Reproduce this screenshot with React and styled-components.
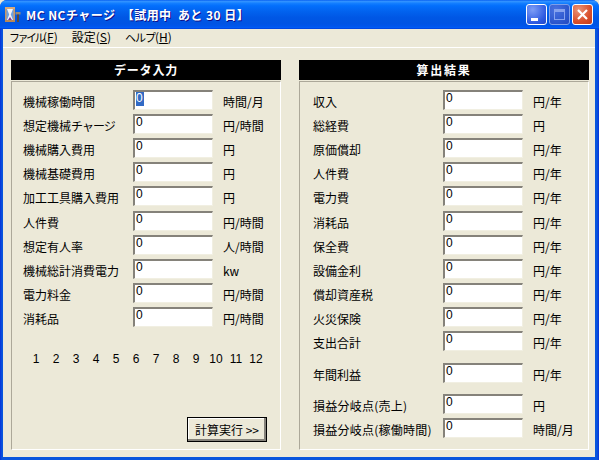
import React from "react";
import styled, { createGlobalStyle } from "styled-components";

const GlobalStyle = createGlobalStyle`
  html, body {
    margin: 0;
    padding: 0;
    background: #ece9d8;
  }
  body {
    width: 599px;
    height: 460px;
    overflow: hidden;
    font-family: "Noto Sans CJK JP", "Liberation Sans", sans-serif;
    font-size: 12px;
    color: #000;
  }
`;

const inputRows = [
  ["機械稼働時間", "時間/月"],
  ["想定機械", "円/時間", "チャージ"],
  ["機械購入費用", "円"],
  ["機械基礎費用", "円"],
  ["加工工具購入費用", "円"],
  ["人件費", "円/時間"],
  ["想定有人率", "人/時間"],
  ["機械総計消費電力", "kw"],
  ["電力料金", "円/時間"],
  ["消耗品", "円/時間"],
];

const resultRows = [
  ["収入", "円/年"],
  ["総経費", "円"],
  ["原価償却", "円/年"],
  ["人件費", "円/年"],
  ["電力費", "円/年"],
  ["消耗品", "円/年"],
  ["保全費", "円/年"],
  ["設備金利", "円/年"],
  ["償却資産税", "円/年"],
  ["火災保険", "円/年"],
  ["支出合計", "円/年"],
];

const months = [1, 2, 3, 4, 5, 6, 7, 8, 9, 10, 11, 12];

const App = () => {
  return (
    <Window>
      <GlobalStyle />
      <TitleBar>
        <AppIcon viewBox="0 0 16 16">
          <rect x="0" y="0" width="10" height="15" fill="#6f9fe0" />
          <rect x="0" y="0" width="10" height="2" fill="#d8a878" />
          <rect x="0" y="13" width="10" height="2" fill="#b88858" />
          <rect x="0" y="2" width="1.5" height="11" fill="#c89868" />
          <rect x="8.5" y="2" width="1.5" height="11" fill="#c89868" />
          <path d="M2 2h6L5.8 7.5 8 13H2l2.2-5.5z" fill="#f4f4f8" />
          <path d="M3 13l2-3 2 3z" fill="#7a3a9a" />
          <rect x="10.5" y="5" width="5" height="2.5" fill="#9a8a78" />
          <rect x="12" y="7.5" width="2" height="7.5" fill="#5a4a40" />
        </AppIcon>
        <TitleText>MC NCチャージ  【試用中  あと 30 日】</TitleText>
        <WindowButtons>
          <MinButton>
            <MinGlyph />
          </MinButton>
          <MaxButton>
            <MaxGlyph />
          </MaxButton>
          <CloseButton>
            <svg width="13" height="13" viewBox="0 0 13 13">
              <path d="M2 2l9 9M11 2l-9 9" stroke="#fff" strokeWidth="2.2" />
            </svg>
          </CloseButton>
        </WindowButtons>
      </TitleBar>
      <Body>
        <MenuBar>
          <MenuItem>
            <MenuKana $squeeze={2.5}>ファイル</MenuKana>(<u>F</u>)
          </MenuItem>
          <MenuItem>設定(<u>S</u>)</MenuItem>
          <MenuItem>
            <MenuKana $squeeze={1}>ヘルプ</MenuKana>(<u>H</u>)
          </MenuItem>
        </MenuBar>
        <Columns>
          <Panel $width={270}>
            <PanelHeader $spacing={0.8}>データ入力</PanelHeader>
            <PanelBody>
              <Rows>
                {inputRows.map(([label, unit, kana], i) => (
                  <Row key={label} $labelWidth={110} $gap={i === 4 ? 5 : 4}>
                    <Label>
                      {label}
                      {kana && <LabelKana>{kana}</LabelKana>}
                    </Label>
                    <Field>{i === 0 ? <Selected>0</Selected> : "0"}</Field>
                    <Unit>{unit}</Unit>
                  </Row>
                ))}
              </Rows>
              <Months>
                {months.map((m) => (
                  <Month key={m}>{m}</Month>
                ))}
              </Months>
              <RunButton>計算実行 &gt;&gt;</RunButton>
            </PanelBody>
          </Panel>
          <Panel $width={290}>
            <PanelHeader $spacing={1.7}>算出結果</PanelHeader>
            <ResultBody>
              <Rows>
                {resultRows.map(([label, unit], i) => (
                  <Row key={label} $labelWidth={130} $gap={i === 4 ? 5 : 4}>
                    <Label>{label}</Label>
                    <Field>0</Field>
                    <Unit>{unit}</Unit>
                  </Row>
                ))}
                <ProfitRow $labelWidth={130} $gap={11}>
                  <Label>年間利益</Label>
                  <Field>0</Field>
                  <Unit>円/年</Unit>
                </ProfitRow>
                <Row $labelWidth={130} $gap={4}>
                  <WideLabel>損益分岐点(売上)</WideLabel>
                  <Field>0</Field>
                  <Unit>円</Unit>
                </Row>
                <Row $labelWidth={130} $gap={4}>
                  <WideLabel>損益分岐点(稼働時間)</WideLabel>
                  <Field>0</Field>
                  <Unit>時間/月</Unit>
                </Row>
              </Rows>
            </ResultBody>
          </Panel>
        </Columns>
      </Body>
    </Window>
  );
};

export default App;

const Window = styled.div`
  width: 599px;
  height: 460px;
  box-sizing: border-box;
  display: flex;
  flex-direction: column;
  padding: 0 4px 3px 3px;
  background: linear-gradient(90deg, #0831d9 0, #0855dd 2px, #0855dd calc(100% - 2px), #0831d9 100%);
  border-radius: 7px 7px 0 0;
  overflow: hidden;
`;

const TitleBar = styled.div`
  flex: none;
  height: 29px;
  margin: 0 -4px 0 -3px;
  padding: 0 6px 0 5px;
  display: flex;
  align-items: center;
  background: linear-gradient(
    180deg,
    #0058ee 0,
    #3593ff 4%,
    #288eff 7%,
    #127dff 12%,
    #036ffc 20%,
    #0262ee 40%,
    #0057e5 60%,
    #0054e3 80%,
    #0055eb 90%,
    #005bf5 95%,
    #003dd7 100%
  );
`;

const AppIcon = styled.svg`
  width: 16px;
  height: 16px;
  margin: 1px 5px 0 0;
  flex: none;
`;

const TitleText = styled.div`
  flex: 1;
  color: #fff;
  font-family: "Noto Sans CJK JP", sans-serif;
  font-size: 12px;
  font-weight: 700;
  letter-spacing: 0.45px;
  white-space: pre;
  text-shadow: 1px 1px 0 #0f1089;
`;

const WindowButtons = styled.div`
  display: flex;
  gap: 2px;
  margin-top: -1px;
`;

const CaptionButton = styled.div`
  width: 21px;
  height: 21px;
  box-sizing: border-box;
  border: 1px solid #fff;
  border-radius: 3px;
  display: flex;
  align-items: center;
  justify-content: center;
  position: relative;
`;

const MinButton = styled(CaptionButton)`
  background: radial-gradient(circle at 30% 25%, #7d9df6, #2c58e0 70%, #2248c8);
`;

const MaxButton = styled(CaptionButton)`
  border-color: #7f9fe8;
  background: radial-gradient(circle at 30% 25%, #4a72e0, #2a55cc 70%, #2448c0);
`;

const CloseButton = styled(CaptionButton)`
  background: radial-gradient(circle at 30% 25%, #ea9478, #d9502c 60%, #c23a1a);
`;

const MinGlyph = styled.div`
  position: absolute;
  left: 4px;
  bottom: 3px;
  width: 7px;
  height: 3px;
  background: #fff;
`;

const MaxGlyph = styled.div`
  width: 11px;
  height: 11px;
  box-sizing: border-box;
  border: 1px solid #86a2ee;
  border-top-width: 3px;
`;

const Body = styled.div`
  flex: 1;
  display: flex;
  flex-direction: column;
  background: #ece9d8;
  min-height: 0;
`;

const MenuBar = styled.div`
  flex: none;
  height: 19px;
  box-sizing: border-box;
  padding: 0 0 3px 6px;
  display: flex;
  align-items: center;
  gap: 14px;
  border-bottom: 1px solid #fff;
  font-size: 12px;
`;

const MenuItem = styled.span`
  white-space: nowrap;
`;

const MenuKana = styled.span`
  font-size: 11px;
  letter-spacing: -${(p) => p.$squeeze}px;
`;

const Columns = styled.div`
  flex: 1;
  display: flex;
  gap: 18px;
  padding: 12px 0 7px 8px;
  min-height: 0;
`;

const Panel = styled.div`
  width: ${(p) => p.$width}px;
  display: flex;
  flex-direction: column;
`;

const PanelHeader = styled.div`
  flex: none;
  height: 20px;
  background: #000;
  color: #fff;
  font-weight: 700;
  font-size: 12px;
  line-height: 20px;
  text-align: center;
  letter-spacing: ${(p) => p.$spacing}px;
`;

const PanelBody = styled.div`
  flex: 1;
  position: relative;
  box-sizing: border-box;
  margin-top: 1px;
  padding: 7px 0 0 11px;
  border-left: 1px solid #aca899;
  border-right: 1px solid #fff;
  border-bottom: 1px solid #fff;
  border-top: 1px solid #aca899;
`;

const ResultBody = styled(PanelBody)`
  padding-left: 13px;
`;

const Rows = styled.div`
  display: flex;
  flex-direction: column;
`;

const Row = styled.div`
  display: grid;
  grid-template-columns: ${(p) => p.$labelWidth}px 80px auto;
  align-items: center;
  height: 20px;
  margin-bottom: ${(p) => p.$gap}px;
`;

const ProfitRow = styled(Row)`
  margin-top: 8px;
`;

const Label = styled.span`
  margin-top: 4px;
  font-size: 12px;
  white-space: nowrap;
`;

const LabelKana = styled.span`
  letter-spacing: -1px;
`;

const WideLabel = styled(Label)`
  letter-spacing: 0.25px;
`;

const Field = styled.div`
  height: 20px;
  box-sizing: border-box;
  background: #fff;
  border-top: 2px solid #85827a;
  border-left: 2px solid #85827a;
  border-right: 1px solid #f1efe2;
  border-bottom: 1px solid #f1efe2;
  font-family: "Liberation Sans", sans-serif;
  font-size: 12px;
  line-height: 12px;
  padding-left: 1px;
`;

const Selected = styled.span`
  display: inline-block;
  width: 8px;
  height: 14px;
  line-height: 12px;
  background: #316ac5;
  color: #fff;
`;

const Unit = styled.span`
  margin: 4px 0 0 10px;
  font-size: 12px;
  white-space: nowrap;
`;

const Months = styled.div`
  display: flex;
  margin: 22px 0 0 3px;
`;

const Month = styled.span`
  width: 20px;
  text-align: center;
  font-family: "Liberation Sans", sans-serif;
  font-size: 12px;
`;

const RunButton = styled.div`
  position: absolute;
  right: 13px;
  bottom: 7px;
  width: 80px;
  height: 25px;
  box-sizing: border-box;
  border: 1px solid #000;
  background: #ece9d8;
  box-shadow: inset -2px -2px 0 #85827a, inset 1px 1px 0 #fff;
  display: flex;
  align-items: center;
  justify-content: center;
  font-size: 12px;
`;
